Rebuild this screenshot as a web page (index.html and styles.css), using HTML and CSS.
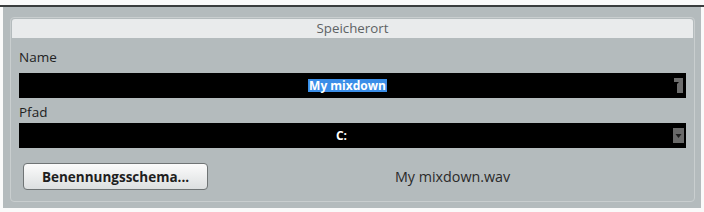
FILE: index.html
```html
<!DOCTYPE html>
<html lang="de">
<head>
  <meta charset="UTF-8" />
  <title>Speicherort</title>
  <link rel="stylesheet" href="styles.css">
</head>
<body>
  <div class="topline"></div>
  <div class="panel">
    <div class="frame">
      <div class="header">Speicherort</div>
      <div class="content">
        <div class="label label-name">Name</div>
        <div class="field">
          <span class="sel">My mixdown</span>
          <svg class="corner" width="10" height="15" viewBox="0 0 10 15">
            <polygon points="0,0 9,0 9,15 3,15 3,6 5,4 0,4" fill="#6d6d6d"/>
          </svg>
        </div>
        <div class="label label-path">Pfad</div>
        <div class="field">
          <span class="val">C:</span>
          <svg class="drop" width="11" height="15" viewBox="0 0 11 15">
            <rect x="0" y="0" width="11" height="15" fill="#6a6a6a"/>
            <polygon points="2.5,6 8.5,6 5.5,10" fill="#1e1e1e"/>
          </svg>
        </div>
        <div class="bottom">
          <button class="btn">Benennungsschema...</button>
          <div class="filename">My mixdown.wav</div>
        </div>
      </div>
    </div>
  </div>
</body>
</html>
```

FILE: styles.css
```css
body {
  margin: 0;
  background: #fafafa;
  font-family: "Open Sans", "DejaVu Sans", sans-serif;
  font-size: 13px;
  color: #222;
}

.topline {
  margin-top: 5px;
  height: 2px;
  background: #3a3d3e;
}

.panel {
  margin: 0 3px;
  height: 201px;
  box-sizing: border-box;
  background: #b4bbbd;
  padding: 10px 6px 6px 7px;
}

.frame {
  height: 100%;
  box-sizing: border-box;
  border: 1px solid #c9cecf;
  border-radius: 4px;
  padding: 1px;
}

.header {
  height: 19px;
  line-height: 18px;
  background: #e9ebec;
  border-radius: 3px 3px 0 0;
  text-align: center;
  color: #5d6264;
  font-size: 13.3px;
}

.content {
  padding: 0 7px 0 7px;
}

.label {
  height: 18px;
  line-height: 18px;
  font-size: 13.5px;
}

.label-name {
  margin-top: 10px;
  margin-bottom: 7px;
}

.label-path {
  margin-top: 5px;
  margin-bottom: 2px;
}

.field {
  position: relative;
  height: 25px;
  background: #000;
  display: flex;
  align-items: center;
  justify-content: center;
  font-size: 12px;
  font-weight: bold;
  color: #fff;
}

.sel {
  background: #3b8ee8;
  padding: 0 1px;
  line-height: 13px;
  margin-left: -10px;
}

.val {
  margin-left: -22px;
}

.corner,
.drop {
  position: absolute;
  right: 2px;
  top: 5px;
}

.bottom {
  display: flex;
  align-items: center;
  margin-top: 15px;
}

.btn {
  width: 185px;
  height: 27px;
  margin-left: 4px;
  border: 1px solid #6f7475;
  border-radius: 4px;
  background: linear-gradient(#fbfbfb, #dcdfe0);
  font-family: "Open Sans", "DejaVu Sans", sans-serif;
  font-size: 13.5px;
  font-weight: bold;
  color: #1e1e1e;
  padding: 0;
}

.filename {
  margin-left: 187px;
  font-size: 14.3px;
  color: #2a2a2a;
}
```
